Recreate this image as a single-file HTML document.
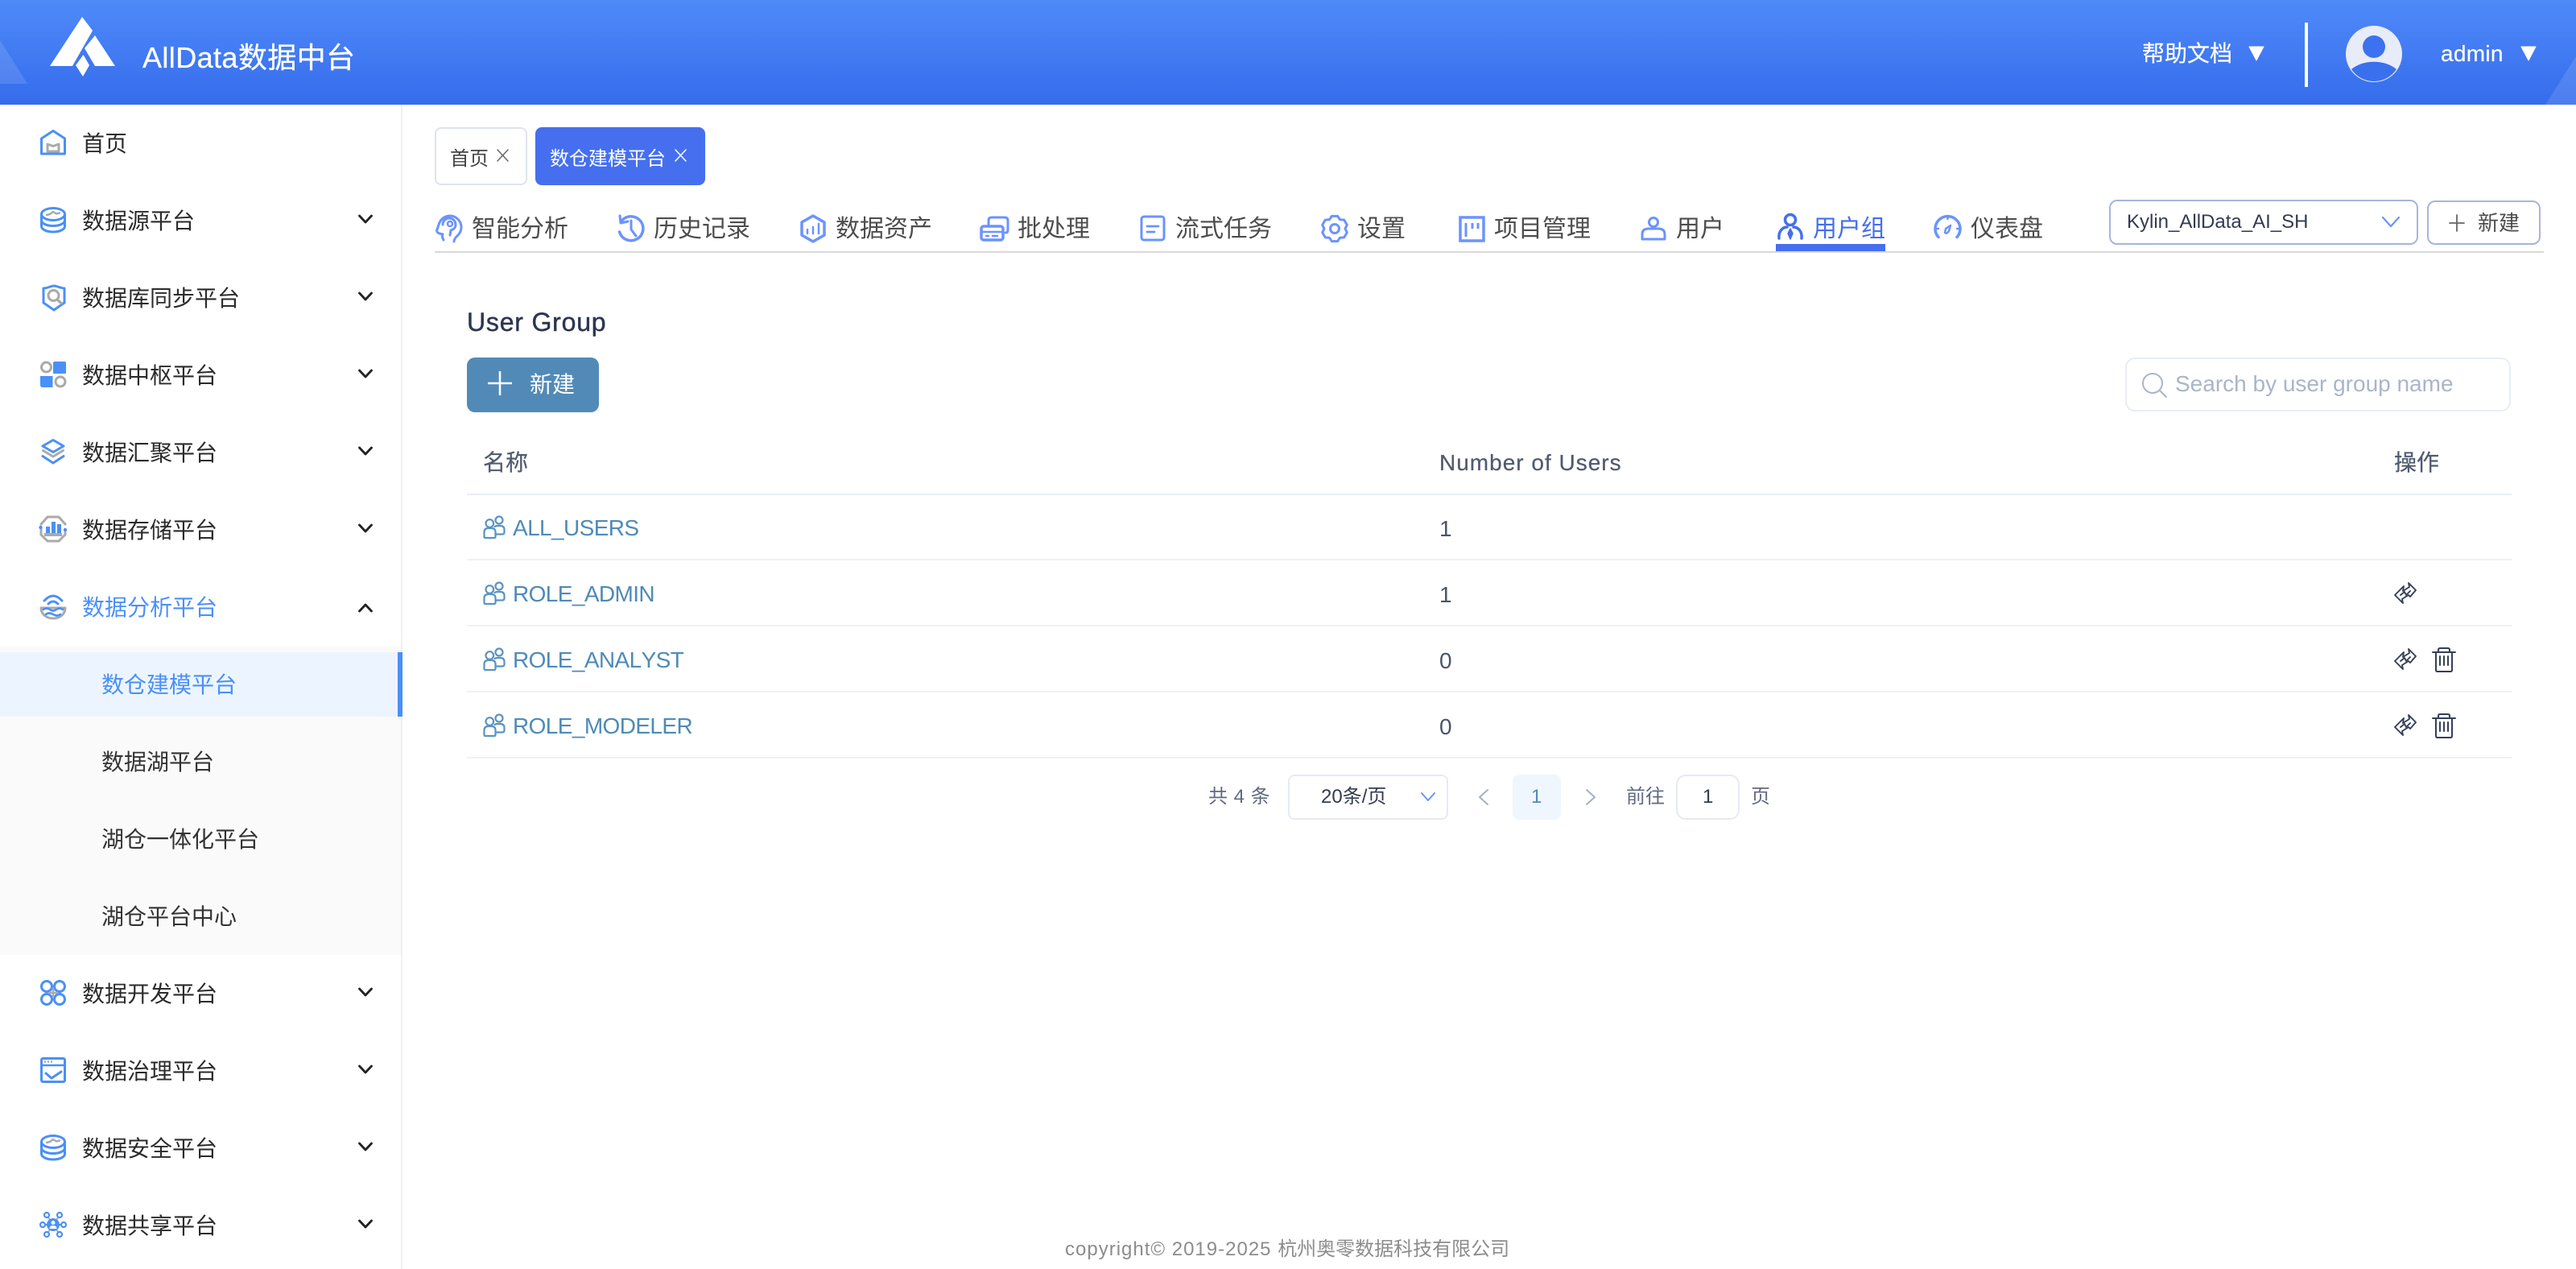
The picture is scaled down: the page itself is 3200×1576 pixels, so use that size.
<!DOCTYPE html>
<html lang="zh">
<head>
<meta charset="utf-8">
<title>User Group</title>
<style>
html,body{margin:0;padding:0;background:#fff;}
body{width:3200px;height:1576px;position:relative;overflow:hidden;font-family:"Liberation Sans","Noto Sans CJK SC",sans-serif;}
.t{position:absolute;white-space:nowrap;line-height:1;}
.box{position:absolute;box-sizing:border-box;}
.side{font-size:28px;color:#2b2b2b;left:102px;}
.sub{font-size:28px;color:#333;left:126px;}
.nav{font-size:30px;color:#4d4d4d;}
.cell{font-size:28px;color:#4a5568;}
.link{font-size:28px;color:#4f8ab8;left:637px;letter-spacing:-.6px;font-kerning:none;}
.th{font-size:28px;color:#505b70;-webkit-text-stroke:.25px #505b70;}
.pg{font-size:24px;color:#606a80;}
</style>
</head>
<body>
<div class="box" style="left:0;top:0;width:3200px;height:130px;background:linear-gradient(180deg,#4f8af9 0%,#356cec 100%);"></div>
<div class="box" style="left:498px;top:130px;width:2px;height:1446px;background:#f0f0f0;"></div>
<div class="box" style="left:0;top:802px;width:498px;height:384px;background:#fafafa;"></div>
<div class="box" style="left:0;top:810px;width:500px;height:80px;background:#ecf5ff;border-right:6px solid #4a90f7;"></div>

<div class="t" style="left:177px;top:54px;font-size:36px;color:#fff;letter-spacing:.4px;-webkit-text-stroke:.3px #fff;">AllData数据中台</div>
<div class="t" style="left:2661px;top:53px;font-size:28px;color:#fff;-webkit-text-stroke:.2px #fff;">帮助文档</div>
<div class="t" style="left:3032px;top:53px;font-size:28px;color:#fff;letter-spacing:.3px;-webkit-text-stroke:.2px #fff;">admin</div>

<div class="t side" style="top:165px;">首页</div>
<div class="t side" style="top:261px;">数据源平台</div>
<div class="t side" style="top:357px;">数据库同步平台</div>
<div class="t side" style="top:453px;">数据中枢平台</div>
<div class="t side" style="top:549px;">数据汇聚平台</div>
<div class="t side" style="top:645px;">数据存储平台</div>
<div class="t side" style="top:741px;color:#4a90f7;">数据分析平台</div>
<div class="t sub" style="top:837px;color:#4a90f7;">数仓建模平台</div>
<div class="t sub" style="top:933px;">数据湖平台</div>
<div class="t sub" style="top:1029px;">湖仓一体化平台</div>
<div class="t sub" style="top:1125px;">湖仓平台中心</div>
<div class="t side" style="top:1221px;">数据开发平台</div>
<div class="t side" style="top:1317px;">数据治理平台</div>
<div class="t side" style="top:1413px;">数据安全平台</div>
<div class="t side" style="top:1509px;">数据共享平台</div>

<div class="box" style="left:540px;top:158px;width:115px;height:72px;border:2px solid #dfe3ee;border-radius:8px;background:#fff;"></div>
<div class="t" style="left:559px;top:186px;font-size:24px;color:#444;">首页</div>
<div class="box" style="left:665px;top:158px;width:211px;height:72px;border-radius:8px;background:#456fee;"></div>
<div class="t" style="left:683px;top:186px;font-size:24px;color:#fff;">数仓建模平台</div>

<div class="t nav" style="left:586px;top:270px;">智能分析</div>
<div class="t nav" style="left:812px;top:270px;">历史记录</div>
<div class="t nav" style="left:1038px;top:270px;">数据资产</div>
<div class="t nav" style="left:1264px;top:270px;">批处理</div>
<div class="t nav" style="left:1460px;top:270px;">流式任务</div>
<div class="t nav" style="left:1686px;top:270px;">设置</div>
<div class="t nav" style="left:1856px;top:270px;">项目管理</div>
<div class="t nav" style="left:2082px;top:270px;">用户</div>
<div class="t nav" style="left:2252px;top:270px;color:#456fee;">用户组</div>
<div class="t nav" style="left:2448px;top:270px;">仪表盘</div>
<div class="box" style="left:540px;top:312px;width:2620px;height:2px;background:#d9d9d9;"></div>
<div class="box" style="left:2206px;top:303px;width:136px;height:9px;background:#456fee;"></div>

<div class="box" style="left:2620px;top:248px;width:384px;height:56px;border:2px solid #a6b5da;border-radius:10px;background:#fff;"></div>
<div class="t" style="left:2642px;top:264px;font-size:24px;color:#333b50;">Kylin_AllData_AI_SH</div>
<div class="box" style="left:3015px;top:249px;width:141px;height:55px;border:2px solid #a6b5da;border-radius:10px;background:#fff;"></div>
<div class="t" style="left:3078px;top:264px;font-size:26px;color:#4d4d4d;">新建</div>

<div class="t" style="left:580px;top:384px;font-size:32px;color:#2d3650;letter-spacing:.8px;-webkit-text-stroke:.45px #2d3650;">User Group</div>
<div class="box" style="left:580px;top:444px;width:164px;height:68px;border-radius:10px;background:#528ab7;"></div>
<div class="t" style="left:658px;top:464px;font-size:28px;color:#fff;">新建</div>
<div class="box" style="left:2640px;top:444px;width:479px;height:67px;border:2px solid #e8ecf5;border-radius:12px;background:#fff;"></div>
<div class="t" style="left:2702px;top:463px;font-size:28px;color:#a9b5c9;">Search by user group name</div>

<div class="t th" style="left:600px;top:561px;">名称</div>
<div class="t th" style="left:1788px;top:561px;letter-spacing:1px;">Number of Users</div>
<div class="t th" style="left:2974px;top:561px;">操作</div>
<div class="box" style="left:580px;top:613px;width:2540px;height:2px;background:#e9edf5;"></div>
<div class="box" style="left:580px;top:694px;width:2540px;height:2px;background:#eef1f6;"></div>
<div class="box" style="left:580px;top:776px;width:2540px;height:2px;background:#eef1f6;"></div>
<div class="box" style="left:580px;top:858px;width:2540px;height:2px;background:#eef1f6;"></div>
<div class="box" style="left:580px;top:940px;width:2540px;height:2px;background:#eef1f6;"></div>

<div class="t link" style="top:642px;">ALL_USERS</div>
<div class="t link" style="top:724px;">ROLE_ADMIN</div>
<div class="t link" style="top:806px;">ROLE_ANALYST</div>
<div class="t link" style="top:888px;">ROLE_MODELER</div>
<div class="t cell" style="left:1788px;top:643px;">1</div>
<div class="t cell" style="left:1788px;top:725px;">1</div>
<div class="t cell" style="left:1788px;top:807px;">0</div>
<div class="t cell" style="left:1788px;top:889px;">0</div>

<div class="t pg" style="left:1501px;top:978px;letter-spacing:.5px;">共 4 条</div>
<div class="box" style="left:1600px;top:962px;width:199px;height:56px;border:2px solid #e6eaf4;border-radius:8px;background:#fff;"></div>
<div class="t" style="left:1641px;top:978px;font-size:24px;color:#333b50;">20条/页</div>
<div class="box" style="left:1879px;top:962px;width:60px;height:56px;border-radius:8px;background:#f0f6fd;"></div>
<div class="t" style="left:1902px;top:978px;font-size:24px;color:#4f8ab8;">1</div>
<div class="t pg" style="left:2020px;top:978px;">前往</div>
<div class="box" style="left:2082px;top:962px;width:79px;height:56px;border:2px solid #e6eaf4;border-radius:12px;background:#fff;"></div>
<div class="t" style="left:2115px;top:978px;font-size:24px;color:#333b50;">1</div>
<div class="t pg" style="left:2175px;top:978px;">页</div>

<div class="t" style="left:1323px;top:1540px;font-size:24px;color:#8c8c8c;letter-spacing:1px;">copyright© 2019-2025 <span style="letter-spacing:0;">杭州奥零数据科技有限公司</span></div>

<svg width="3200" height="1576" viewBox="0 0 3200 1576" style="position:absolute;left:0;top:0;" fill="none" stroke-linecap="round" stroke-linejoin="round">
<defs>
  <g id="db">
    <ellipse cx="16" cy="9" rx="14.500" ry="7.500" stroke="#4a90f7" stroke-width="3"/>
    <path d="M1.500 9v15c0 4 6.500 7 14.500 7s14.500-3 14.500-7V9M1.500 16.500c0 4 6.500 7 14.500 7s14.500-3 14.500-7" stroke="#4a90f7" stroke-width="3"/>
    <path d="M8 10l4-1 4-3 4 2.500 4-1" stroke="#aaa" stroke-width="2.500"/>
  </g>
  <g id="grp" stroke="#5a93c1" stroke-width="2.200">
    <circle cx="8.300" cy="9" r="4.800"/><circle cx="20" cy="5" r="4.500"/>
    <path d="M1.500 25.500V20q0-5 5-5h4q5 0 5 5v5.500q0 1.500-1.500 1.500H3q-1.500 0-1.500-1.500Z"/>
    <path d="M15.500 22.500H24q2.500 0 2.500-2.500v-3q0-5-5-5H18q-2 0-3.500 1"/>
  </g>
  <g id="swap" stroke="#353f57" stroke-width="1.900">
    <path d="M12 5L1 16l10 10-1-5 8-5 2 2 7-8-9-9 1 5-8 5Z"/>
    <path d="M8 16l5-4 2 4 5-5"/>
  </g>
  <g id="trash" stroke="#353f57" stroke-width="2">
    <path d="M7 6V3q0-2 2-2h10q2 0 2 2v3M0 6h28M4 6v22q0 2 2 2h16q2 0 2-2V6M9 11v11M14 11v11M19 11v11"/>
  </g>
  <path id="chev" stroke="#222" stroke-width="2.800" d="M0 0L7.500 8 15 0"/>
</defs>

<!-- header decor & logo -->
<path d="M0 50L34 104H0Z" fill="#fff" fill-opacity=".12"/>
<path d="M3162 130L3200 70V130Z" fill="#fff" fill-opacity=".12"/>
<path d="M102 21L115 38 90 82H62Z" fill="#fff"/>
<path d="M118 44L143 82H118L105 60Z" fill="#fff"/>
<path d="M103.500 68L111 81 103 95 94 81Z" fill="#fff"/>

<!-- header right -->
<path d="M2794 58H2812L2803 75Z" fill="#fff" stroke="#fff"/>
<path d="M3132 58H3150L3141 75Z" fill="#fff" stroke="#fff"/>
<rect x="2863" y="28" width="4" height="80" fill="#fff"/>
<circle cx="2949" cy="67" r="35" fill="#e8ecf8"/>
<ellipse cx="2949" cy="58" rx="14" ry="14" fill="#3c72ef"/>
<path d="M2921 86C2928 80 2938 76.700 2949 76.700S2970 80 2977 86C2970 96 2960 101 2949 101S2928 96 2921 86Z" fill="#3a70ee"/>

<!-- sidebar icons -->
<g transform="translate(50,161)">
  <path d="M1.500 30V11L16 1.500 30.500 11V30Z" stroke="#4a90f7" stroke-width="3"/>
  <path d="M9 18l7 2.500 7-2.500v9H9Z" stroke="#aaa" stroke-width="3"/>
</g>
<use href="#db" x="50" y="257"/>
<g transform="translate(52,353)">
  <path d="M2 5C8 5 11 2 15 2s8 3 13 3v18L15 32 2 23Z" stroke="#4a90f7" stroke-width="3"/>
  <circle cx="14.500" cy="14" r="6.500" stroke="#aaa" stroke-width="3"/>
  <path d="M19 19l5 4.500" stroke="#aaa" stroke-width="3.500"/>
</g>
<g transform="translate(50,449)">
  <circle cx="7.500" cy="7" r="6" stroke="#aaa" stroke-width="3"/>
  <path d="M16 2q0-2 2-2h12q2 0 2 2v13H16Z" fill="#4a90f7"/>
  <path d="M0 18h15.500v14H3q-3 0-3-3Z" fill="#4a90f7"/>
  <circle cx="25" cy="25" r="6" stroke="#aaa" stroke-width="3"/>
</g>
<g transform="translate(50,545)">
  <path d="M16 1.500L29 9 16 16.500 3 9Z" stroke="#4a90f7" stroke-width="3"/>
  <path d="M3.500 14.500L16 22l12.500-7.500" stroke="#aaa" stroke-width="3"/>
  <path d="M3 21.500L16 30l13-8.500" stroke="#4a90f7" stroke-width="3"/>
</g>
<g transform="translate(48,640)">
  <path d="M3 11L11 2h14l8 9M3 24l8 8h14l8-8" stroke="#aaa" stroke-width="3"/>
  <path d="M3 17v6M33 19v5" stroke="#aaa" stroke-width="3"/>
  <rect x="9" y="14" width="5" height="10" fill="#4a90f7"/><rect x="16" y="8" width="5" height="16" fill="#4a90f7"/><rect x="23" y="11" width="5" height="13" fill="#4a90f7"/>
  <rect x="7" y="22" width="22" height="4" fill="#aaa"/>
  <circle cx="2.500" cy="15" r="2.200" fill="#4a90f7"/><circle cx="33" cy="18" r="2.200" fill="#4a90f7"/>
</g>
<g transform="translate(50,737)">
  <path d="M5 9Q16-3 27 9M10 13Q16 7 22 13" stroke="#4a90f7" stroke-width="3"/>
  <path d="M1 18H31C31 26 24 31 16 31S1 26 1 18Z" stroke="#aaa" stroke-width="3"/>
  <path d="M4 20q4-3 8 0t8 0 8 0M7 26q4-3 9 0t9 0" stroke="#4a90f7" stroke-width="2.600"/>
</g>
<g transform="translate(50,1217)" stroke="#4a90f7" stroke-width="3">
  <circle cx="8" cy="8" r="6.500"/><circle cx="24" cy="8" r="6.500"/><circle cx="8" cy="24" r="6.500"/><circle cx="24" cy="24" r="6.500"/>
  <path d="M16 11v10M11 16h10" stroke="#aaa" stroke-width="2.500"/>
</g>
<g transform="translate(50,1313)">
  <rect x="1.500" y="1.500" width="29" height="29" rx="2" stroke="#4a90f7" stroke-width="3"/>
  <path d="M2 10h28" stroke="#4a90f7" stroke-width="2.500"/>
  <path d="M5 5.500h10" stroke="#aaa" stroke-width="2.500" stroke-dasharray="2 2" stroke-linecap="butt"/>
  <path d="M7 20l7 6 12-8" stroke="#4a90f7" stroke-width="3"/>
</g>
<use href="#db" x="50" y="1409"/>
<g transform="translate(50,1505)">
  <path d="M8 4l8 12 8-12M8 28l8-12 8 12" stroke="#aaa" stroke-width="2"/>
  <path d="M3 16h26" stroke="#4a90f7" stroke-width="2"/>
  <g stroke="#4a90f7" stroke-width="2.200" fill="#fff">
    <circle cx="8" cy="4" r="3"/><circle cx="24" cy="4" r="3"/><circle cx="3" cy="16" r="3"/><circle cx="29" cy="16" r="3"/><circle cx="8" cy="28" r="3"/><circle cx="24" cy="28" r="3"/>
  </g>
  <circle cx="16" cy="16" r="8" fill="#4a90f7"/>
  <circle cx="16" cy="13.500" r="2.500" fill="#fff"/><path d="M11.500 21q0-4 4.500-4t4.500 4Z" fill="#fff"/>
</g>

<!-- sidebar chevrons -->
<use href="#chev" x="446.500" y="268"/>
<use href="#chev" x="446.500" y="364"/>
<use href="#chev" x="446.500" y="460"/>
<use href="#chev" x="446.500" y="556"/>
<use href="#chev" x="446.500" y="652"/>
<path d="M446.500 759L454 751 461.500 759" stroke="#222" stroke-width="2.800"/>
<use href="#chev" x="446.500" y="1228"/>
<use href="#chev" x="446.500" y="1324"/>
<use href="#chev" x="446.500" y="1420"/>
<use href="#chev" x="446.500" y="1516"/>

<!-- tag close -->
<path d="M618 186l13 14M631 186l-13 14" stroke="#666" stroke-width="1.500"/>
<path d="M839 186l13 14M852 186l-13 14" stroke="#fff" stroke-width="1.500"/>

<!-- nav icons -->
<g stroke="#6b93ff" stroke-width="3">
  <path d="M551 298c-2-3-2-5-1-7l-4-1c-3-1-4-3-3-5l2-6c2-7 8-11 14-11 8 0 14 7 14 14 0 6-3 9-6 12-2 2-3 4-3 6"/>
  <path d="M550 279c0-5 4-8 8-8 5 0 8 4 8 8 0 4-3 6-6 7l-1 6"/>
  <circle cx="559" cy="278" r="3" stroke-width="2.500"/>
  <path d="M770 268l1 9 9-2" stroke-width="3"/>
  <path d="M773 273.500A15 15 0 1 1 769.500 288" stroke-width="3.500"/>
  <path d="M784 274V285l6 8" stroke-width="3"/>
  <path d="M1010 268L1024 276V292L1010 300 996 292V276Z" stroke-width="3.500"/>
  <path d="M1003 285v5M1010 282v8M1017 278v12" stroke-width="2.500"/>
  <rect x="1219" y="281" width="27" height="17" rx="3" stroke-width="3.500"/>
  <path d="M1219 288h27M1225 293h3M1233 293h6" stroke-width="2.500"/>
  <path d="M1228 280v-6q0-4 4-4h16q4 0 4 4v12q0 3-3 3" stroke-width="3"/>
  <rect x="1418" y="269" width="28" height="29" rx="3" stroke-width="3"/>
  <path d="M1425 281h14M1425 288h9" stroke-width="2.800"/>
  <path transform="translate(1658,284)" stroke-width="3" d="M3.600-15.600H-3.600L-6.500-11.300-11.700-10.900-15.300-4.700-13 0-15.300 4.700-11.700 10.900-6.500 11.300-3.600 15.600H3.600L6.500 11.300 11.700 10.900 15.300 4.700 13 0 15.300-4.700 11.700-10.900 6.500-11.300Z"/>
  <circle cx="1658" cy="284" r="5.500" stroke-width="3"/>
  <rect x="1814" y="270" width="29" height="29" stroke-width="3.500" stroke-linejoin="miter"/>
  <path d="M1821 277v17M1829 277v7M1836 277v7" stroke-width="3" stroke-linecap="butt"/>
  <circle cx="2054" cy="276" r="5.500" stroke-width="3"/>
  <path d="M2040 297v-6q0-7 8-7h12q8 0 8 7v6Z" stroke-width="3"/>
  <path d="M2408 294.500A15.500 15.500 0 1 1 2431 294.500" stroke-width="3.500"/>
  <path d="M2419.500 268v4M2405 284h3M2434 284h-3" stroke-width="2.500"/>
  <path d="M2416 289l1-5 6-4-2 7q-3 4-5 2Z" stroke-width="2.500"/>
</g>
<g stroke="#456fee" stroke-width="3">
  <circle cx="2224" cy="273" r="6.500" stroke-width="3.500"/>
  <path d="M2210 296c-1-8 4-14 10-14M2238 296c1-8-4-14-10-14" stroke-width="3.500"/>
  <path d="M2224 284l-3 6 3 7 3-7Z" fill="#456fee" stroke-width="1.500"/>
</g>

<!-- selector -->
<path d="M2960 270L2970 281 2980 270" stroke="#6b93ff" stroke-width="2.200"/>
<path d="M3052 267V287M3043 277H3061" stroke="#666" stroke-width="1.800"/>

<!-- button / search -->
<path d="M621 461V491M606 476H636" stroke="#fff" stroke-width="2.500" stroke-linecap="butt"/>
<circle cx="2674" cy="476" r="12" stroke="#a9b5c9" stroke-width="2"/>
<path d="M2683 485l8 8" stroke="#a9b5c9" stroke-width="2"/>

<!-- table icons -->
<use href="#grp" x="600" y="641"/>
<use href="#grp" x="600" y="723"/>
<use href="#grp" x="600" y="805"/>
<use href="#grp" x="600" y="887"/>
<use href="#swap" x="2974" y="723"/>
<use href="#swap" x="2974" y="805"/>
<use href="#swap" x="2974" y="887"/>
<use href="#trash" x="3022" y="804"/>
<use href="#trash" x="3022" y="886"/>

<!-- pagination -->
<path d="M1766 985L1774 994 1782 985" stroke="#6b93ff" stroke-width="2"/>
<path d="M1848 981L1838 990 1848 999" stroke="#a6b0c4" stroke-width="2"/>
<path d="M1971 981L1981 990 1971 999" stroke="#a6b0c4" stroke-width="2"/>
</svg>
</body>
</html>
